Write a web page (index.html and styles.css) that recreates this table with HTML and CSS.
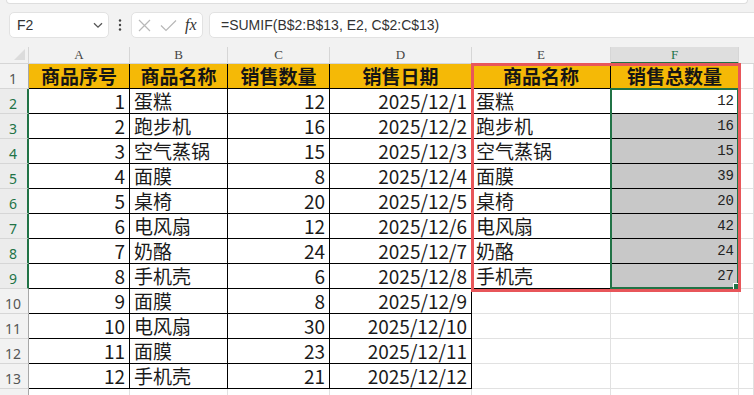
FILE: index.html
```html
<!DOCTYPE html>
<html lang="zh">
<head>
<meta charset="utf-8">
<title>SUMIF</title>
<link rel="stylesheet" href="styles.css">
</head>
<body>
<div class="app">
  <div class="topbar">
    <div class="ribbon-edge"></div>
    <div class="formula-row">
      <div class="namebox">
        <span class="name">F2</span>
        <svg class="chev" width="10" height="7" viewBox="0 0 10 7"><path d="M1 1.2 L5 5.2 L9 1.2" fill="none" stroke="#555" stroke-width="1.3"/></svg>
      </div>
      <div class="dots">
        <svg width="4" height="12" viewBox="0 0 4 12"><circle cx="2" cy="1.5" r="1.2" fill="#444"/><circle cx="2" cy="6" r="1.2" fill="#444"/><circle cx="2" cy="10.5" r="1.2" fill="#444"/></svg>
      </div>
      <div class="fbtns">
        <svg class="ico" width="13" height="13" viewBox="0 0 13 13"><path d="M1 1 L12 12 M12 1 L1 12" stroke="#b8b8b8" stroke-width="1.2" fill="none"/></svg>
        <svg class="ico" width="17" height="13" viewBox="0 0 17 13"><path d="M1 6.5 L6 11.5 L16 1.5" stroke="#b8b8b8" stroke-width="1.2" fill="none"/></svg>
        <span class="fx">fx</span>
      </div>
      <div class="finput">=SUMIF(B$2:B$13, E2, C$2:C$13)</div>
    </div>
  </div>

  <div class="sheet">
    <div class="grid">
      <!-- column headers -->
      <div class="corner"><span class="tri"></span></div>
      <div class="ch">A</div>
      <div class="ch">B</div>
      <div class="ch">C</div>
      <div class="ch">D</div>
      <div class="ch">E</div>
      <div class="ch ch-sel">F</div>
      <div class="ch ch-last"></div>

      <!-- row 1 -->
      <div class="rh">1</div>
      <div class="c hd">商品序号</div>
      <div class="c hd">商品名称</div>
      <div class="c hd">销售数量</div>
      <div class="c hd">销售日期</div>
      <div class="c hd">商品名称</div>
      <div class="c hd">销售总数量</div>
      <div class="e"></div>

      <!-- row 2 -->
      <div class="rh rh-sel">2</div>
      <div class="c num">1</div>
      <div class="c txt">蛋糕</div>
      <div class="c num">12</div>
      <div class="c num">2025/12/1</div>
      <div class="c txt">蛋糕</div>
      <div class="c fnum">12</div>
      <div class="e"></div>

      <!-- row 3 -->
      <div class="rh rh-sel">3</div>
      <div class="c num">2</div>
      <div class="c txt">跑步机</div>
      <div class="c num">16</div>
      <div class="c num">2025/12/2</div>
      <div class="c txt">跑步机</div>
      <div class="c fnum shade">16</div>
      <div class="e"></div>

      <!-- row 4 -->
      <div class="rh rh-sel">4</div>
      <div class="c num">3</div>
      <div class="c txt">空气蒸锅</div>
      <div class="c num">15</div>
      <div class="c num">2025/12/3</div>
      <div class="c txt">空气蒸锅</div>
      <div class="c fnum shade">15</div>
      <div class="e"></div>

      <!-- row 5 -->
      <div class="rh rh-sel">5</div>
      <div class="c num">4</div>
      <div class="c txt">面膜</div>
      <div class="c num">8</div>
      <div class="c num">2025/12/4</div>
      <div class="c txt">面膜</div>
      <div class="c fnum shade">39</div>
      <div class="e"></div>

      <!-- row 6 -->
      <div class="rh rh-sel">6</div>
      <div class="c num">5</div>
      <div class="c txt">桌椅</div>
      <div class="c num">20</div>
      <div class="c num">2025/12/5</div>
      <div class="c txt">桌椅</div>
      <div class="c fnum shade">20</div>
      <div class="e"></div>

      <!-- row 7 -->
      <div class="rh rh-sel">7</div>
      <div class="c num">6</div>
      <div class="c txt">电风扇</div>
      <div class="c num">12</div>
      <div class="c num">2025/12/6</div>
      <div class="c txt">电风扇</div>
      <div class="c fnum shade">42</div>
      <div class="e"></div>

      <!-- row 8 -->
      <div class="rh rh-sel">8</div>
      <div class="c num">7</div>
      <div class="c txt">奶酪</div>
      <div class="c num">24</div>
      <div class="c num">2025/12/7</div>
      <div class="c txt">奶酪</div>
      <div class="c fnum shade">24</div>
      <div class="e"></div>

      <!-- row 9 -->
      <div class="rh rh-sel">9</div>
      <div class="c num">8</div>
      <div class="c txt">手机壳</div>
      <div class="c num">6</div>
      <div class="c num">2025/12/8</div>
      <div class="c txt">手机壳</div>
      <div class="c fnum shade">27</div>
      <div class="e"></div>

      <!-- row 10 -->
      <div class="rh">10</div>
      <div class="c num">9</div>
      <div class="c txt">面膜</div>
      <div class="c num">8</div>
      <div class="c num">2025/12/9</div>
      <div class="e"></div>
      <div class="e"></div>
      <div class="e"></div>

      <!-- row 11 -->
      <div class="rh">11</div>
      <div class="c num">10</div>
      <div class="c txt">电风扇</div>
      <div class="c num">30</div>
      <div class="c num">2025/12/10</div>
      <div class="e"></div>
      <div class="e"></div>
      <div class="e"></div>

      <!-- row 12 -->
      <div class="rh">12</div>
      <div class="c num">11</div>
      <div class="c txt">面膜</div>
      <div class="c num">23</div>
      <div class="c num">2025/12/11</div>
      <div class="e"></div>
      <div class="e"></div>
      <div class="e"></div>

      <!-- row 13 -->
      <div class="rh">13</div>
      <div class="c num">12</div>
      <div class="c txt">手机壳</div>
      <div class="c num">21</div>
      <div class="c num">2025/12/12</div>
      <div class="e"></div>
      <div class="e"></div>
      <div class="e"></div>

      <!-- row 14 (partly visible) -->
      <div class="rh rh-top">14</div>
      <div class="e"></div>
      <div class="e"></div>
      <div class="e"></div>
      <div class="e"></div>
      <div class="e"></div>
      <div class="e"></div>
      <div class="e"></div>
    </div>
    <div class="sel-box"><span class="handle"></span></div>
    <div class="red-box"></div>
  </div>
</div>
</body>
</html>
```

FILE: styles.css
```css
html, body {
  margin: 0;
  padding: 0;
  background: #ffffff;
  overflow: hidden;
}

.app {
  width: 754px;
  height: 395px;
  overflow: hidden;
  font-family: "Noto Sans CJK SC", "Noto Sans", sans-serif;
}

/* ---------- top bar ---------- */
.topbar {
  background: #f2f2f2;
  height: 47px;
  overflow: hidden;
}

.ribbon-edge {
  height: 3px;
  margin: 0 6px;
  background: #ffffff;
  border: 1px solid #dedede;
  border-top: none;
  border-radius: 0 0 6px 6px;
}

.formula-row {
  display: flex;
  align-items: stretch;
  height: 26px;
  margin-top: 8px;
  padding-left: 9px;
}

.namebox {
  width: 100px;
  box-sizing: border-box;
  background: #ffffff;
  border: 1px solid #e2e2e2;
  border-radius: 5px;
  display: flex;
  align-items: center;
  justify-content: space-between;
  padding: 0 5px 0 7px;
}

.name {
  font-family: "Liberation Sans", sans-serif;
  font-size: 14px;
  color: #333;
}

.chev {
  display: block;
}

.dots {
  width: 22px;
  display: flex;
  align-items: center;
  justify-content: center;
}

.dots svg {
  display: block;
}

.fbtns {
  width: 72px;
  box-sizing: border-box;
  background: #ffffff;
  border: 1px solid #e2e2e2;
  border-radius: 5px;
  display: flex;
  align-items: center;
  padding-left: 6px;
  gap: 9px;
}

.ico {
  display: block;
}

.fx {
  font-family: "Liberation Serif", serif;
  font-style: italic;
  font-size: 16px;
  color: #333;
  margin-left: -1px;
}

.finput {
  flex: 1;
  margin-left: 6px;
  margin-right: -12px;
  background: #ffffff;
  border: 1px solid #e2e2e2;
  border-radius: 5px;
  display: flex;
  align-items: center;
  padding-left: 11px;
  font-family: "Liberation Sans", sans-serif;
  font-size: 14px;
  color: #333;
}

/* ---------- sheet ---------- */
.sheet {
  position: relative;
}

.grid {
  display: grid;
  grid-template-columns: 29px 101px 98px 102px 142px 139px 128px 1fr;
  grid-template-rows: 17px repeat(13, 25px) 25px;
}

.corner {
  background: #f2f2f2;
  border-right: 1px solid #d6d6d6;
  border-bottom: 1px solid #d6d6d6;
  position: relative;
}

.tri {
  position: absolute;
  right: 3px;
  bottom: 3px;
  width: 0;
  height: 0;
  border-left: 11px solid transparent;
  border-bottom: 11px solid #dcdcdc;
}

.ch {
  background: #f2f2f2;
  border-right: 1px solid #d6d6d6;
  border-bottom: 1px solid #d6d6d6;
  font-family: "Liberation Serif", serif;
  font-size: 13px;
  line-height: 16px;
  color: #444;
  text-align: center;
}

.ch-sel {
  background: #dedede;
  color: #217346;
  border-bottom: 2px solid #217346;
  line-height: 15px;
}

.ch-last {
  border-right: none;
}

.rh {
  background: #f2f2f2;
  border-right: 1px solid #a8a8a8;
  border-bottom: 1px solid #d6d6d6;
  font-family: "Noto Sans", sans-serif;
  font-size: 14px;
  color: #555;
  display: flex;
  align-items: flex-end;
  justify-content: center;
  line-height: 18px;
  padding-right: 2px;
}

.rh-top {
  align-items: flex-start;
  padding-top: 4px;
}

.rh-sel {
  color: #217346;
  background: #ececec;
  border-right: 2px solid #217346;
  padding-right: 1px;
}

.c {
  border-right: 1px solid #000;
  border-bottom: 1px solid #000;
  display: flex;
  align-items: flex-end;
  font-size: 19px;
  line-height: 23px;
  color: #1a1a1a;
  padding-bottom: 1px;
  white-space: nowrap;
}

.hd {
  background: #f5b906;
  font-weight: 700;
  justify-content: center;
  color: #151515;
}

.num {
  justify-content: flex-end;
  padding-right: 4px;
}

.txt {
  padding-left: 4px;
}

.fnum {
  justify-content: flex-end;
  padding-right: 4px;
  font-family: "Liberation Mono", monospace;
  font-size: 14px;
  line-height: 18px;
  padding-bottom: 3px;
  color: #222;
}

.shade {
  background: #c8c8c8;
}

.e {
  border-right: 1px solid #e1e1e1;
  border-bottom: 1px solid #e1e1e1;
}

/* ---------- overlays ---------- */
.sel-box {
  position: absolute;
  left: 610px;
  top: 41px;
  width: 129px;
  height: 201px;
  box-sizing: border-box;
  border: 2px solid #217346;
}

.handle {
  position: absolute;
  right: -3px;
  bottom: -3px;
  width: 5px;
  height: 5px;
  background: #217346;
  border: 1px solid #ffffff;
}

.red-box {
  position: absolute;
  left: 471px;
  top: 16px;
  width: 270px;
  height: 229px;
  box-sizing: border-box;
  border: 3px solid #e8565a;
}
```
